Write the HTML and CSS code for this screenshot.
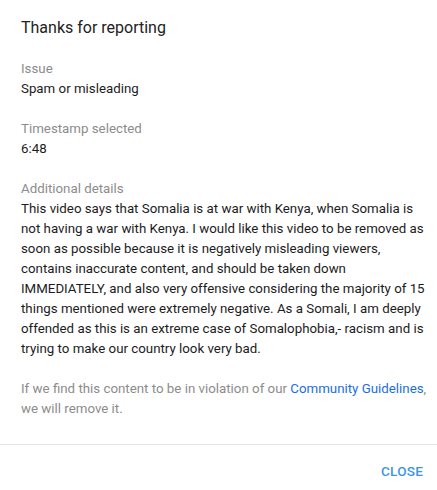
FILE: index.html
```html
<!DOCTYPE html>
<html lang="en">
<head>
	<meta charset="UTF-8">
	<title>Thanks for reporting</title>
	<link rel="stylesheet" href="styles.css">
</head>
<body>
	<div class="dialog">
		<div class="content">
			<h2 class="title">Thanks for reporting</h2>
			<div class="field">
				<div class="label">Issue</div>
				<div class="value">Spam or misleading</div>
			</div>
			<div class="field">
				<div class="label">Timestamp selected</div>
				<div class="value">6:48</div>
			</div>
			<div class="field">
				<div class="label">Additional details</div>
				<div class="value">This video says that Somalia is at war with Kenya, when Somalia is not having a war with Kenya. I would like this video to be removed as soon as possible because it is negatively misleading viewers, contains inaccurate content, and should be taken down IMMEDIATELY, and also very offensive considering the majority of 15 things mentioned were extremely negative. As a Somali, I am deeply offended as this is an extreme case of Somalophobia,- racism and is trying to make our country look very bad.</div>
			</div>
			<p class="note">If we find this content to be in violation of our <a href="#">Community Guidelines</a>, we will remove it.</p>
		</div>
		<div class="buttons">
			<button class="close">Close</button>
		</div>
	</div>
</body>
</html>
```

FILE: styles.css
```css
body,h2,p{margin: 0;padding: 0;}
body{font: 13.3px/20px Roboto, "Liberation Sans", Arial, sans-serif;color: #1c1c1c;background: #fff;}
.dialog{width: 437px;height: 490px;display: flex;flex-direction: column;}
.content{padding: 16px 6px 25px 21px;border-bottom: 1px solid #e5e5e5;}
.title{font-size: 16px;font-weight: 400;line-height: 24px;color: #222;margin-bottom: 19px;}
.field{margin-bottom: 20px;}
.label{color: #8c8c8c;}
.note{color: #8c8c8c;}
.note a{color: #1a6fe0;text-decoration: none;}
.buttons{display: flex;justify-content: flex-end;padding: 8px 6px 0 0;}
.close{font: 500 13.55px/36px Roboto, "Liberation Sans", Arial, sans-serif;text-transform: uppercase;color: #3a96e6;background: none;border: 0;padding: 0 8px;letter-spacing: .2px;cursor: pointer;}
```
